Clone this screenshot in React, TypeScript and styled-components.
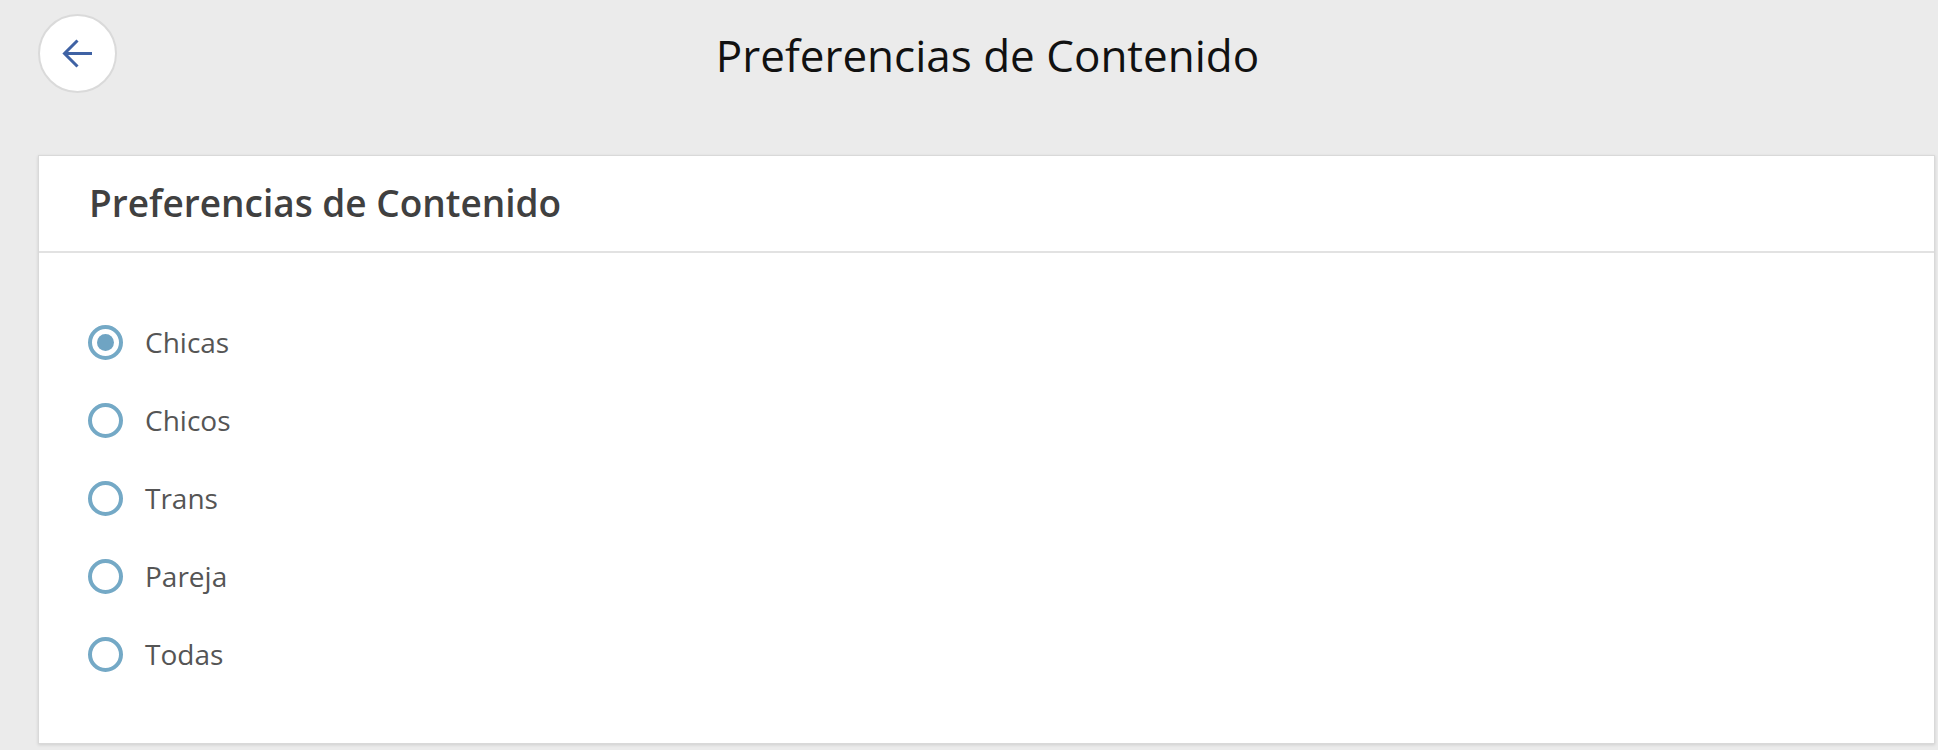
import React, { useState } from "react";
import styled, { createGlobalStyle } from "styled-components";

const GlobalStyle = createGlobalStyle`
  html, body {
    margin: 0;
    padding: 0;
    background: #ebebeb;
    font-family: "Open Sans", "Noto Sans", Arial, sans-serif;
  }
  * { box-sizing: border-box; }
`;

const Page = styled.div`
  width: 1938px;
  min-height: 750px;
  background: #ebebeb;
  padding: 14px 3px 0 38px;
`;

const TopBar = styled.header`
  display: flex;
  align-items: center;
  height: 79px;
  padding-right: 77px;
`;

const BackButton = styled.button`
  flex: 0 0 auto;
  width: 79px;
  height: 79px;
  border-radius: 50%;
  background: #ffffff;
  border: 2px solid #dadada;
  display: flex;
  align-items: center;
  justify-content: center;
  padding: 0;
  cursor: pointer;
`;

const PageTitle = styled.h1`
  flex: 1;
  margin: 0;
  text-align: center;
  font-size: 44px;
  font-weight: 400;
  color: #111111;
  line-height: normal;
  transform: translateY(1px);
`;

const Card = styled.section`
  margin-top: 62px;
  background: #ffffff;
  border: 1px solid #d9d9d9;
  box-shadow: 0 1px 3px rgba(0, 0, 0, 0.12);
  height: 589px;
  display: flex;
  flex-direction: column;
`;

const CardHeader = styled.div`
  height: 98px;
  display: flex;
  align-items: center;
  padding: 0 50px;
  border-bottom: 2px solid #e2e2e2;
`;

const CardTitle = styled.h2`
  margin: 0;
  font-size: 37px;
  font-weight: 600;
  color: #404040;
  line-height: normal;
  transform: translateY(-1px);
`;

const CardBody = styled.div`
  padding: 50px 49px;
  display: flex;
  flex-direction: column;
`;

const Option = styled.label`
  display: flex;
  align-items: center;
  height: 78px;
  gap: 22px;
  cursor: pointer;
`;

const HiddenInput = styled.input`
  position: absolute;
  opacity: 0;
  width: 0;
  height: 0;
`;

const Ring = styled.span<{ $checked: boolean }>`
  flex: 0 0 auto;
  width: 35px;
  height: 35px;
  border-radius: 50%;
  border: 4px solid #74a9c6;
  display: flex;
  align-items: center;
  justify-content: center;

  &::after {
    content: "";
    width: 17px;
    height: 17px;
    border-radius: 50%;
    background: #6fa4c3;
    display: ${(p) => (p.$checked ? "block" : "none")};
  }
`;

const OptionText = styled.span`
  font-size: 28px;
  color: #555555;
  line-height: normal;
`;

const options = ["Chicas", "Chicos", "Trans", "Pareja", "Todas"];

export default function App() {
  const [selected, setSelected] = useState("Chicas");
  return (
    <>
      <GlobalStyle />
      <Page>
        <TopBar>
          <BackButton aria-label="Volver">
            <svg width="40" height="40" viewBox="0 0 40 40" fill="none">
              <path
                d="M34 19.5H8.5M19.5 6.5L6.5 19.5L19.5 32.5"
                stroke="#3f62a4"
                strokeWidth="3"
                strokeLinecap="butt"
                strokeLinejoin="miter"
              />
            </svg>
          </BackButton>
          <PageTitle>Preferencias de Contenido</PageTitle>
        </TopBar>
        <Card>
          <CardHeader>
            <CardTitle>Preferencias de Contenido</CardTitle>
          </CardHeader>
          <CardBody>
            {options.map((o) => (
              <Option key={o}>
                <HiddenInput
                  type="radio"
                  name="pref"
                  checked={selected === o}
                  onChange={() => setSelected(o)}
                />
                <Ring $checked={selected === o} />
                <OptionText>{o}</OptionText>
              </Option>
            ))}
          </CardBody>
        </Card>
      </Page>
    </>
  );
}
